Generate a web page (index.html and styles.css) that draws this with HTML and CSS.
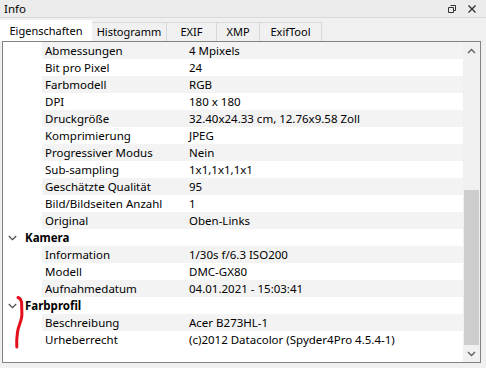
FILE: index.html
```html
<!DOCTYPE html>
<html>
<head>
<meta charset="utf-8">
<link rel="stylesheet" href="styles.css">
</head>
<body>
<div class="panel">
  <div class="titlebar">
    <span class="title">Info</span>
    <div class="title-icons">
      <svg class="ico" width="10" height="10" viewBox="0 0 10 10"><path d="M3.5 1.5h5v5h-2M1.5 3.5h5v5h-5z" fill="none" stroke="#333" stroke-width="1"/></svg>
      <svg class="ico" width="10" height="10" viewBox="0 0 10 10"><path d="M1.5 1.5l7 7M8.5 1.5l-7 7" fill="none" stroke="#333" stroke-width="1.4"/></svg>
    </div>
  </div>
  <div class="tabs">
    <div class="tab active w-eig">Eigenschaften</div>
    <div class="tab w-hist">Histogramm</div>
    <div class="tab w-exif">EXIF</div>
    <div class="tab w-xmp">XMP</div>
    <div class="tab w-tool">ExifTool</div>
  </div>
  <div class="pane">
    <div class="list">
      <div class="row prop alt"><span class="k">Abmessungen</span><span class="v">4 Mpixels</span></div>
      <div class="row prop"><span class="k">Bit pro Pixel</span><span class="v">24</span></div>
      <div class="row prop alt"><span class="k">Farbmodell</span><span class="v">RGB</span></div>
      <div class="row prop"><span class="k">DPI</span><span class="v">180 x 180</span></div>
      <div class="row prop alt"><span class="k">Druckgröße</span><span class="v">32.40x24.33 cm, 12.76x9.58 Zoll</span></div>
      <div class="row prop"><span class="k">Komprimierung</span><span class="v">JPEG</span></div>
      <div class="row prop alt"><span class="k">Progressiver Modus</span><span class="v">Nein</span></div>
      <div class="row prop"><span class="k">Sub-sampling</span><span class="v">1x1,1x1,1x1</span></div>
      <div class="row prop alt"><span class="k">Geschätzte Qualität</span><span class="v">95</span></div>
      <div class="row prop"><span class="k">Bild/Bildseiten Anzahl</span><span class="v">1</span></div>
      <div class="row prop alt"><span class="k">Original</span><span class="v">Oben-Links</span></div>
      <div class="row cat"><svg class="chev" width="9" height="6" viewBox="0 0 9 6"><path d="M0.8 1l3.7 3.7L8.2 1" fill="none" stroke="#444" stroke-width="1.1"/></svg><span class="c">Kamera</span></div>
      <div class="row prop alt"><span class="k">Information</span><span class="v">1/30s f/6.3 ISO200</span></div>
      <div class="row prop"><span class="k">Modell</span><span class="v">DMC-GX80</span></div>
      <div class="row prop alt"><span class="k">Aufnahmedatum</span><span class="v">04.01.2021 - 15:03:41</span></div>
      <div class="row cat"><svg class="chev" width="9" height="6" viewBox="0 0 9 6"><path d="M0.8 1l3.7 3.7L8.2 1" fill="none" stroke="#444" stroke-width="1.1"/></svg><span class="c">Farbprofil</span></div>
      <div class="row prop alt"><span class="k">Beschreibung</span><span class="v">Acer B273HL-1</span></div>
      <div class="row prop"><span class="k">Urheberrecht</span><span class="v">(c)2012 Datacolor (Spyder4Pro 4.5.4-1)</span></div>
      <svg class="mark" width="12" height="56" viewBox="0 0 12 56"><path d="M5 2.5C7.5 3.5 8.8 6 8.7 10C8.5 14 9.5 18 8.5 23C7.5 28 5.5 31 4.5 37C3.8 42 3.5 47 3.8 52" fill="none" stroke="#e3101c" stroke-width="3" stroke-linecap="round"/></svg>
    </div>
    <div class="scrollbar">
      <div class="arrow"><svg width="9" height="6" viewBox="0 0 9 6"><path d="M1 5l3.5-3.5L8 5" fill="none" stroke="#606060" stroke-width="1.4"/></svg></div>
      <div class="track"><div class="thumb"></div></div>
      <div class="arrow"><svg width="9" height="6" viewBox="0 0 9 6"><path d="M1 1l3.5 3.5L8 1" fill="none" stroke="#606060" stroke-width="1.4"/></svg></div>
    </div>
  </div>
</div>
</body>
</html>
```
FILE: styles.css
```css
html, body {
  margin: 0;
  padding: 0;
}
body {
  width: 486px;
  height: 368px;
  overflow: hidden;
  background: #f0f0f0;
  font-family: "Noto Sans", "Open Sans", sans-serif;
  font-size: 11.5px;
  color: #000;
}
.panel {
  display: flex;
  flex-direction: column;
  height: 368px;
}
.titlebar {
  height: 17px;
  border-bottom: 1px solid #dadada;
  background: #ececec;
  display: flex;
  align-items: center;
  justify-content: space-between;
  padding: 0 9px 0 4px;
}
.title {
  line-height: 17px;
}
.title-icons {
  display: flex;
  gap: 10px;
  align-items: center;
}
.ico {
  display: block;
}
.tabs {
  height: 23px;
  display: flex;
  align-items: flex-end;
}
.tab {
  box-sizing: border-box;
  height: 19px;
  line-height: 18px;
  text-align: center;
  font-size: 11px;
  border: 1px solid #d9d9d9;
  border-left: none;
  border-bottom: none;
  background: #f0f0f0;
}
.tab.active {
  height: 21px;
  line-height: 21px;
  background: #fff;
  border: none;
}
.w-eig { width: 92px; }
.w-hist { width: 75px; }
.w-exif { width: 50px; }
.w-xmp { width: 43px; }
.w-tool { width: 62px; }
.pane {
  flex: 1;
  margin: 0 5px 5px 2px;
  border: 1px solid #828282;
  background: #fff;
  display: flex;
}
.list {
  flex: 1;
  position: relative;
}
.row {
  height: 17px;
  line-height: 17px;
  display: flex;
  white-space: nowrap;
}
.prop {
  padding-left: 39px;
}
.prop.alt {
  background: linear-gradient(#f3f3f3, #f3f3f3) no-repeat 39px 0 / calc(100% - 39px) 100%;
}
.prop .k {
  padding-left: 3px;
  width: 144px;
}
.cat {
  align-items: center;
  padding-left: 5px;
}
.chev {
  display: block;
  margin-right: 8px;
}
.c {
  font-weight: bold;
}
.mark {
  position: absolute;
  left: 10px;
  top: 253px;
}
.scrollbar {
  width: 17px;
  background: #f0f0f0;
  display: flex;
  flex-direction: column;
}
.arrow {
  height: 17px;
  display: flex;
  align-items: center;
  justify-content: center;
}
.track {
  flex: 1;
  display: flex;
  flex-direction: column;
  justify-content: flex-end;
}
.thumb {
  height: 155px;
  background: #cdcdcd;
  margin: 0 1px;
}
```
